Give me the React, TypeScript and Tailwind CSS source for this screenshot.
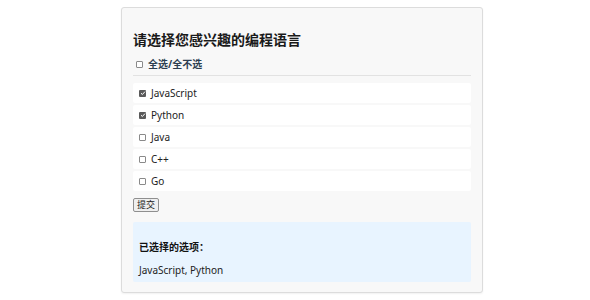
import React from "react";

const items = [
  { name: "JavaScript", checked: true },
  { name: "Python", checked: true },
  { name: "Java", checked: false },
  { name: "C++", checked: false },
  { name: "Go", checked: false },
];

function Box({ checked }: { checked: boolean }) {
  if (checked) {
    return (
      <span className="flex h-[7px] w-[7px] shrink-0 items-center justify-center rounded-[1px] bg-[#5a5a5a]">
        <svg width="6" height="6" viewBox="0 0 6 6">
          <path d="M1 3.2 L2.4 4.5 L5 1.6" stroke="#fff" strokeWidth="1" fill="none" />
        </svg>
      </span>
    );
  }
  return <span className="h-[7px] w-[7px] shrink-0 rounded-[1px] border border-[#8a8a8a] bg-white" />;
}

export default function App() {
  return (
    <div
      className="min-h-[300px] w-[590px] bg-white pt-[7px]"
      style={{ fontFamily: '"Noto Sans", "Noto Sans CJK SC", sans-serif' }}
    >
      <div className="ml-[121px] w-[362px] rounded-[3px] border border-[#dcdcdc] bg-[#f8f8f8] px-[11px] pb-[10px] pt-[23px] shadow-[0_1px_2px_rgba(0,0,0,0.06)]">
        <h2 className="text-[14px] font-bold leading-[18px] text-[#1a1a1a]">请选择您感兴趣的编程语言</h2>
        <div className="mt-[6px] flex items-center gap-[5px] border-b border-[#e2e2e2] pb-[2px] pl-[3px] h-[18px] box-content">
          <Box checked={false} />
          <span className="text-[10px] font-bold leading-[14px] text-[#2c3e50]">全选/全不选</span>
        </div>
        <div className="mt-[7px] flex flex-col gap-[2px]">
          {items.map((it) => (
            <div key={it.name} className="flex h-[20px] items-center gap-[5px] rounded-[2px] bg-white pl-[6px]">
              <Box checked={it.checked} />
              <span className="text-[10px] leading-[14px] text-[#222]">{it.name}</span>
            </div>
          ))}
        </div>
        <button className="mt-[7px] flex h-[14px] items-center rounded-[2px] border border-[#8f8f8f] bg-[#efefef] px-[3px] text-[9px] leading-[12px] text-[#222]">
          提交
        </button>
        <div className="mt-[10px] flex h-[60px] flex-col rounded-[2px] bg-[#e8f4ff] pl-[6px] pt-[18px]">
          <div className="text-[10px] font-bold leading-[14px] text-[#111]">已选择的选项：</div>
          <div className="mt-[9px] text-[10px] leading-[14px] text-[#222]">JavaScript, Python</div>
        </div>
      </div>
    </div>
  );
}
